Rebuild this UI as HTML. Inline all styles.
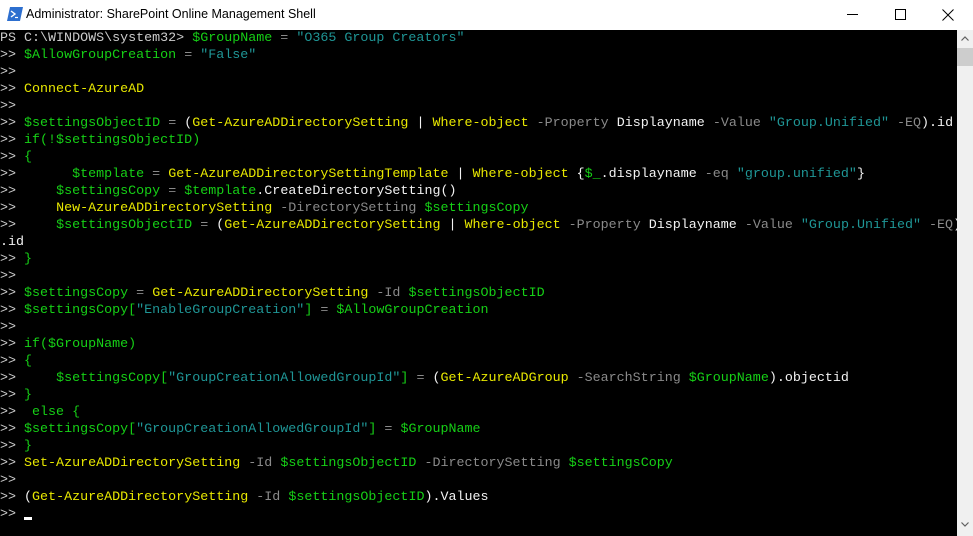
<!DOCTYPE html>
<html><head><meta charset="utf-8"><style>
*{margin:0;padding:0;box-sizing:border-box}
body{width:973px;height:536px;overflow:hidden;background:#fff;position:relative;font-family:"Liberation Sans",sans-serif}
#title{position:absolute;left:0;top:0;width:973px;height:30px;background:#fff}
#title .t{position:absolute;left:26px;top:7px;font-size:12.5px;color:#000}
#con{position:absolute;left:0;top:30px;width:957px;height:506px;background:#000;overflow:hidden}
pre{font-family:"Liberation Mono",monospace;font-size:13.35px;line-height:17px;color:#cccccc;white-space:pre}
.g{color:#16d016}.s{color:#1f9696}.y{color:#e8e800}.p{color:#8a8a8a}.w{color:#f2f2f2}
#sb{position:absolute;left:957px;top:30px;width:16px;height:506px;background:#f0f0f0}
</style></head><body>
<div id="title">
<svg style="position:absolute;left:7px;top:7px" width="16" height="14" viewBox="0 0 16 14"><polygon points="3,0 16,0 13,14 0,14" fill="#2d6fcf"/><polyline points="4,4 8,7 4,10" fill="none" stroke="#fff" stroke-width="1.4"/><line x1="8" y1="10.5" x2="11" y2="10.5" stroke="#fff" stroke-width="1.2"/></svg>
<div class="t">Administrator: SharePoint Online Management Shell</div>
<div style="position:absolute;left:847px;top:14px;width:11px;height:1px;background:#000"></div>
<div style="position:absolute;left:895px;top:9px;width:11px;height:11px;border:1px solid #000"></div>
<svg style="position:absolute;left:942px;top:9px" width="12" height="12"><path d="M0.5 0.5L11.5 11.5M11.5 0.5L0.5 11.5" stroke="#000" stroke-width="1"/></svg>
</div>
<div id="con"><pre>PS C:\WINDOWS\system32&gt; <span class="g">$GroupName</span> <span class="p">=</span> <span class="s">"O365 Group Creators"</span>
&gt;&gt; <span class="g">$AllowGroupCreation</span> <span class="p">=</span> <span class="s">"False"</span>
&gt;&gt;
&gt;&gt; <span class="y">Connect-AzureAD</span>
&gt;&gt;
&gt;&gt; <span class="g">$settingsObjectID</span> <span class="p">=</span> <span class="w">(</span><span class="y">Get-AzureADDirectorySetting</span> <span class="w">|</span> <span class="y">Where-object</span> <span class="p">-Property</span> <span class="w">Displayname</span> <span class="p">-Value</span> <span class="s">"Group.Unified"</span> <span class="p">-EQ</span><span class="w">).id</span>
&gt;&gt; <span class="g">if(!$settingsObjectID)</span>
&gt;&gt; <span class="g">{</span>
&gt;&gt;       <span class="g">$template</span> <span class="p">=</span> <span class="y">Get-AzureADDirectorySettingTemplate</span> <span class="w">|</span> <span class="y">Where-object</span> <span class="w">{</span><span class="g">$_</span><span class="w">.displayname</span> <span class="p">-eq</span> <span class="s">"group.unified"</span><span class="w">}</span>
&gt;&gt;     <span class="g">$settingsCopy</span> <span class="p">=</span> <span class="g">$template</span><span class="w">.CreateDirectorySetting()</span>
&gt;&gt;     <span class="y">New-AzureADDirectorySetting</span> <span class="p">-DirectorySetting</span> <span class="g">$settingsCopy</span>
&gt;&gt;     <span class="g">$settingsObjectID</span> <span class="p">=</span> <span class="w">(</span><span class="y">Get-AzureADDirectorySetting</span> <span class="w">|</span> <span class="y">Where-object</span> <span class="p">-Property</span> <span class="w">Displayname</span> <span class="p">-Value</span> <span class="s">"Group.Unified"</span> <span class="p">-EQ</span><span class="w">)</span>
<span class="w">.id</span>
&gt;&gt; <span class="g">}</span>
&gt;&gt;
&gt;&gt; <span class="g">$settingsCopy</span> <span class="p">=</span> <span class="y">Get-AzureADDirectorySetting</span> <span class="p">-Id</span> <span class="g">$settingsObjectID</span>
&gt;&gt; <span class="g">$settingsCopy[</span><span class="s">"EnableGroupCreation"</span><span class="g">]</span> <span class="p">=</span> <span class="g">$AllowGroupCreation</span>
&gt;&gt;
&gt;&gt; <span class="g">if($GroupName)</span>
&gt;&gt; <span class="g">{</span>
&gt;&gt;     <span class="g">$settingsCopy[</span><span class="s">"GroupCreationAllowedGroupId"</span><span class="g">]</span> <span class="p">=</span> <span class="w">(</span><span class="y">Get-AzureADGroup</span> <span class="p">-SearchString</span> <span class="g">$GroupName</span><span class="w">).objectid</span>
&gt;&gt; <span class="g">}</span>
&gt;&gt;  <span class="g">else {</span>
&gt;&gt; <span class="g">$settingsCopy[</span><span class="s">"GroupCreationAllowedGroupId"</span><span class="g">]</span> <span class="p">=</span> <span class="g">$GroupName</span>
&gt;&gt; <span class="g">}</span>
&gt;&gt; <span class="y">Set-AzureADDirectorySetting</span> <span class="p">-Id</span> <span class="g">$settingsObjectID</span> <span class="p">-DirectorySetting</span> <span class="g">$settingsCopy</span>
&gt;&gt;
&gt;&gt; <span class="w">(</span><span class="y">Get-AzureADDirectorySetting</span> <span class="p">-Id</span> <span class="g">$settingsObjectID</span><span class="w">).Values</span>
&gt;&gt; </pre>
<div style="position:absolute;left:24px;top:487px;width:8px;height:3px;background:#fff"></div>
</div>
<div id="sb">
<svg style="position:absolute;left:4px;top:6px" width="8" height="5"><path d="M0.5 4.5L4 1L7.5 4.5" fill="none" stroke="#606060" stroke-width="1.2"/></svg>
<div style="position:absolute;left:0;top:18px;width:16px;height:18px;background:#cdcdcd"></div>
<svg style="position:absolute;left:4px;top:492px" width="8" height="5"><path d="M0.5 0.5L4 4L7.5 0.5" fill="none" stroke="#606060" stroke-width="1.2"/></svg>
</div>
</body></html>
